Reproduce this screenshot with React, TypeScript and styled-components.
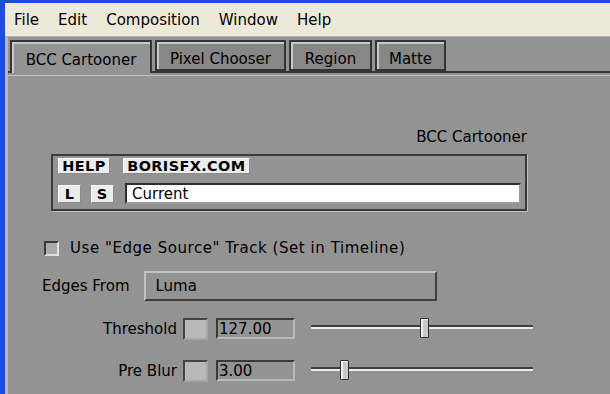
import React from 'react';
import styled, { createGlobalStyle } from 'styled-components';

const GlobalStyle = createGlobalStyle`
    html, body {
        margin: 0;
        padding: 0;
        overflow: hidden;
        background: #939393;
    }
    * {
        box-sizing: border-box;
    }
`;

const Window = styled.div`
    width: 610px;
    height: 394px;
    display: flex;
    flex-direction: column;
    border-top: 3px solid #1c4ddb;
    border-left: 5px solid #1c4ddb;
    background: #939393;
    font-family: 'DejaVu Sans', Verdana, sans-serif;
    font-size: 15px;
    color: #000;
    overflow: hidden;
`;

const MenuBar = styled.div`
    height: 34px;
    display: flex;
    align-items: center;
    gap: 19px;
    padding-left: 9px;
    padding-top: 1px;
    background: #ece9d8;
    border-bottom: 1px solid #b5b2a4;
`;

const MenuItem = styled.span`
    font-size: 15px;
`;

const Body = styled.div`
    flex: 1;
    display: flex;
    flex-direction: column;
    border-left: 3px solid #b9b9b9;
    padding-top: 3px;
`;

const TabStrip = styled.div`
    display: flex;
    align-items: flex-end;
    gap: 3px;
    height: 33px;
    padding-left: 2px;
    border-bottom: 2px solid #353535;
    box-shadow: 0 2px 0 #939393, 0 3px 0 #c4c4c4;
`;

const Tab = styled.div<{ $active?: boolean; $w: number }>`
    height: ${p => (p.$active ? '33px' : '31px')};
    margin-bottom: ${p => (p.$active ? '-2px' : '0')};
    width: ${p => p.$w}px;
    display: flex;
    align-items: center;
    justify-content: center;
    font-size: 15px;
    background: ${p => (p.$active ? '#939393' : '#878787')};
    border: 2px solid #353535;
    border-bottom: ${p => (p.$active ? 'none' : '2px solid #353535')};
    box-shadow: inset 2px 2px 0 #c8c8c8;
    padding-top: ${p => (p.$active ? '5px' : '6px')};
`;

const Panel = styled.div`
    flex: 1;
    display: flex;
    flex-direction: column;
    padding-left: 34px;
`;

const Header = styled.div`
    width: 476px;
    margin-left: 9px;
    margin-top: 55px;
    height: 18px;
    line-height: 18px;
    text-align: right;
    font-size: 15px;
`;

const LogoBox = styled.div`
    width: 476px;
    height: 57px;
    margin-left: 9px;
    margin-top: 8px;
    border: 2px solid #3a3a3a;
    box-shadow: 1px 1px 0 #bdbdbd;
    display: flex;
    flex-direction: column;
    padding: 2px 4px 0 5px;
    gap: 9px;
`;

const LogoRow = styled.div`
    display: flex;
    align-items: center;
    gap: 10px;
`;

const BadgeButton = styled.div<{ $w: number; $h?: number; $gap?: number }>`
    width: ${p => p.$w}px;
    height: ${p => p.$h ?? 16}px;
    margin-right: ${p => p.$gap ?? 0}px;
    display: flex;
    align-items: center;
    justify-content: center;
    overflow: hidden;
    background: #ececec;
    border: 1px solid #f8f8f8;
    border-right-color: #8a8a8a;
    border-bottom-color: #8a8a8a;
`;

const BadgeText = styled.span`
    display: inline-block;
    font-family: 'DejaVu Sans', Verdana, sans-serif;
    font-weight: bold;
    font-size: 14px;
    line-height: 14px;
    letter-spacing: 0.4px;
    transform: scaleX(1.03);
`;

const CurrentField = styled.div`
    flex: 1;
    height: 21px;
    margin-left: 1px;
    background: #fff;
    border: 2px solid #2e2e2e;
    border-right-color: #9a9a9a;
    border-bottom-color: #9a9a9a;
    display: flex;
    align-items: center;
    padding-left: 5px;
    font-size: 15px;
`;

const CheckRow = styled.div`
    display: flex;
    align-items: center;
    margin-top: 29px;
    height: 16px;
`;

const CheckBox = styled.div`
    width: 15px;
    height: 15px;
    margin-left: 2px;
    margin-right: 11px;
    background: #aaaaaa;
    border: 2px solid #3a3a3a;
    border-right-color: #e0e0e0;
    border-bottom-color: #e0e0e0;
`;

const Label = styled.span<{ $spread?: number }>`
    font-size: 15px;
    letter-spacing: ${p => p.$spread ?? 0}px;
    white-space: nowrap;
`;

const ChoiceRow = styled.div`
    display: flex;
    align-items: center;
    margin-top: 15px;
    height: 30px;
`;

const Dropdown = styled.div`
    width: 293px;
    height: 30px;
    margin-left: 14px;
    display: flex;
    align-items: center;
    padding-left: 10px;
    background: #939393;
    border: 2px solid #c2c2c2;
    border-right-color: #3e3e3e;
    border-bottom-color: #3e3e3e;
    font-size: 15px;
`;

const ParamRow = styled.div<{ $top: number }>`
    display: flex;
    align-items: center;
    margin-top: ${p => p.$top}px;
    height: 23px;
`;

const ParamLabel = styled.span`
    width: 135px;
    text-align: right;
    font-size: 15px;
`;

const KeyBox = styled.div`
    width: 25px;
    height: 22px;
    margin-left: 6px;
    background: #b9b9b9;
    border: 2px solid #444;
    border-right-color: #a6a6a6;
    border-bottom-color: #a6a6a6;
`;

const ValueField = styled.div`
    width: 79px;
    height: 21px;
    margin-left: 8px;
    display: flex;
    align-items: center;
    padding-left: 1px;
    background: #939393;
    border: 2px solid #3a3a3a;
    border-right-color: #b8b8b8;
    border-bottom-color: #b8b8b8;
    font-size: 15px;
`;

const Slider = styled.div`
    position: relative;
    width: 222px;
    height: 23px;
    margin-left: 16px;
`;

const Track = styled.div`
    position: absolute;
    left: 0;
    right: 0;
    top: 8px;
    height: 4px;
    border-top: 2px solid #3d3d3d;
    border-bottom: 2px solid #ececec;
    border-radius: 1px;
`;

const Thumb = styled.div`
    position: absolute;
    top: 1px;
    width: 9px;
    height: 20px;
    background: #c9c9c9;
    border: 1px solid #2f2f2f;
    box-shadow: inset 2px 1px 0 #f2f2f2;
    border-radius: 1px;
`;

const tabs = [
    { name: 'BCC Cartooner', w: 142, active: true },
    { name: 'Pixel Chooser', w: 131 },
    { name: 'Region', w: 83 },
    { name: 'Matte', w: 71 },
];

const params = [
    { name: 'Threshold', value: '127.00', pos: 109, top: 16 },
    { name: 'Pre Blur', value: '3.00', pos: 29, top: 19 },
];

export default function App() {
    return (
        <>
            <GlobalStyle />
            <Window>
                <MenuBar>
                    <MenuItem>File</MenuItem>
                    <MenuItem>Edit</MenuItem>
                    <MenuItem>Composition</MenuItem>
                    <MenuItem>Window</MenuItem>
                    <MenuItem>Help</MenuItem>
                </MenuBar>
                <Body>
                    <TabStrip>
                        {tabs.map(t => (
                            <Tab key={t.name} $active={t.active} $w={t.w}>
                                {t.name}
                            </Tab>
                        ))}
                    </TabStrip>
                    <Panel>
                        <Header>BCC Cartooner</Header>
                        <LogoBox>
                            <LogoRow>
                                <BadgeButton $w={52} $gap={3}><BadgeText>HELP</BadgeText></BadgeButton>
                                <BadgeButton $w={127}><BadgeText>BORISFX.COM</BadgeText></BadgeButton>
                            </LogoRow>
                            <LogoRow>
                                <BadgeButton $w={23} $h={18}><BadgeText>L</BadgeText></BadgeButton>
                                <BadgeButton $w={23} $h={18}><BadgeText>S</BadgeText></BadgeButton>
                                <CurrentField>Current</CurrentField>
                            </LogoRow>
                        </LogoBox>
                        <CheckRow>
                            <CheckBox />
                            <Label $spread={0.55}>Use "Edge Source" Track (Set in Timeline)</Label>
                        </CheckRow>
                        <ChoiceRow>
                            <Label>Edges From</Label>
                            <Dropdown>Luma</Dropdown>
                        </ChoiceRow>
                        {params.map(p => (
                            <ParamRow key={p.name} $top={p.top}>
                                <ParamLabel>{p.name}</ParamLabel>
                                <KeyBox />
                                <ValueField>{p.value}</ValueField>
                                <Slider>
                                    <Track />
                                    <Thumb style={{ left: p.pos }} />
                                </Slider>
                            </ParamRow>
                        ))}
                    </Panel>
                </Body>
            </Window>
        </>
    );
}
